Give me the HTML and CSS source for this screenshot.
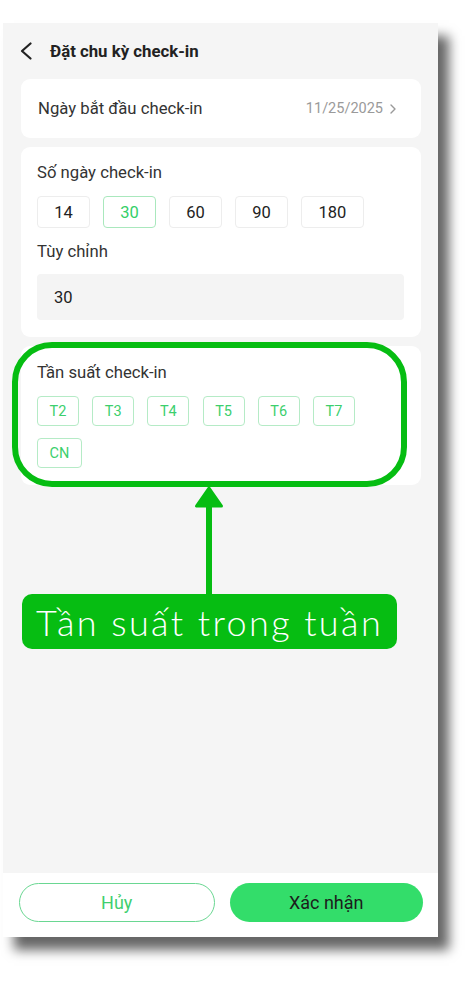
FILE: index.html
```html
<!DOCTYPE html>
<html lang="vi">
<head>
<meta charset="utf-8">
<title>Đặt chu kỳ check-in</title>
<link rel="stylesheet" href="styles.css">
</head>
<body>
<div class="phone">
  <header class="topbar">
    <svg class="back" viewBox="0 0 14 18" width="14" height="18"><path d="M11.5 1.5 L3 9 L11.5 16.5" fill="none" stroke="#222" stroke-width="2.2" stroke-linecap="round" stroke-linejoin="round"/></svg>
    <h1 class="title">Đặt chu kỳ check-in</h1>
  </header>
  <main class="content">
    <section class="card card-row">
      <span class="row-label">Ngày bắt đầu check-in</span>
      <span class="date">11/25/2025<svg class="chev" viewBox="0 0 8 12" width="8" height="12"><path d="M2 2 L6 6 L2 10" fill="none" stroke="#999" stroke-width="1.4" stroke-linecap="round" stroke-linejoin="round"/></svg></span>
    </section>
    <section class="card">
      <div class="label">Số ngày check-in</div>
      <div class="chips">
        <span class="chip">14</span>
        <span class="chip chip-on">30</span>
        <span class="chip">60</span>
        <span class="chip">90</span>
        <span class="chip chip-wide">180</span>
      </div>
      <div class="label label-gap">Tùy chỉnh</div>
      <div class="input">30</div>
    </section>
    <section class="card">
      <div class="label">Tần suất check-in</div>
      <div class="days">
        <span class="day">T2</span>
        <span class="day">T3</span>
        <span class="day">T4</span>
        <span class="day">T5</span>
        <span class="day">T6</span>
        <span class="day">T7</span>
        <span class="day day-wide">CN</span>
      </div>
    </section>
  </main>
  <footer class="bottombar">
    <button class="btn btn-outline">Hủy</button>
    <button class="btn btn-primary">Xác nhận</button>
  </footer>
  <div class="annot-ring"></div>
  <svg class="annot-arrow" viewBox="0 0 32 112" width="32" height="112">
    <rect x="13" y="18" width="6" height="94" fill="#06bd12"/>
    <path d="M16 3 L3.5 21 L28.5 21 Z" fill="#06bd12" stroke="#06bd12" stroke-width="3" stroke-linejoin="round"/>
  </svg>
  <div class="annot-label">Tần suất trong tuần</div>
</div>
</body>
</html>
```

FILE: styles.css
```css
* { box-sizing: border-box; }
html, body { margin: 0; padding: 0; background: #ffffff; }
body {
  min-height: 995px;
  padding-top: 23px;
  font-family: Roboto, "Liberation Sans", Arial, sans-serif;
  color: #222;
}
.phone {
  position: relative;
  margin: 0 0 0 3px;
  width: 435px;
  height: 914px;
  background: #f5f5f5;
  display: flex;
  flex-direction: column;
  box-shadow: 11px 13px 11px rgba(0, 0, 0, 0.6);
}
.topbar {
  height: 56px;
  flex: none;
  display: flex;
  align-items: center;
  padding-left: 16px;
  gap: 17px;
}
.back { display: block; }
.title {
  margin: 0;
  font-size: 16.8px;
  font-weight: 700;
  color: #222;
  line-height: 20px;
}
.content {
  flex: 1;
  display: flex;
  flex-direction: column;
  gap: 9px;
  padding: 0 17px 0 18px;
}
.card {
  background: #fff;
  border-radius: 9px;
  padding: 16px 17px 17px 16px;
}
.card:last-child { padding-top: 17px; }
.card-row {
  height: 59px;
  padding: 0 24px 0 17px;
  display: flex;
  align-items: center;
  justify-content: space-between;
}
.row-label { font-size: 16.7px; color: #333; }
.date {
  font-size: 14.5px;
  color: #9a9a9a;
  display: flex;
  align-items: center;
  gap: 6px;
}
.chev { display: block; }
.label {
  font-size: 16.7px;
  line-height: 20px;
  color: #333;
}
.label-gap { margin-top: 14px; }
.chips {
  margin-top: 13px;
  display: flex;
  gap: 13px;
}
.chip {
  width: 53px;
  height: 32px;
  border: 1px solid #ededed;
  border-radius: 4px;
  display: flex;
  align-items: center;
  justify-content: center;
  font-size: 16.5px;
  color: #222;
}
.chip-wide { width: 63px; }
.chip-on { border-color: #a9e8bd; color: #35cf68; }
.input {
  margin-top: 12px;
  height: 46px;
  background: #f4f4f4;
  border-radius: 4px;
  padding-left: 17px;
  display: flex;
  align-items: center;
  font-size: 16.5px;
  color: #222;
}
.days {
  margin-top: 13px;
  display: flex;
  flex-wrap: wrap;
  gap: 12px 13.2px;
}
.day {
  width: 42px;
  height: 30px;
  border: 1px solid #b5ebc6;
  border-radius: 4px;
  display: flex;
  align-items: center;
  justify-content: center;
  font-size: 14.5px;
  color: #3ccf6d;
}
.day-wide { width: 45px; }
.bottombar {
  flex: none;
  height: 64px;
  background: #fff;
  display: flex;
  gap: 15px;
  padding: 10px 15px 0 16px;
}
.btn {
  flex: 1;
  height: 39px;
  border-radius: 20px;
  font-family: Roboto, "Liberation Sans", Arial, sans-serif;
  font-size: 18px;
  font-weight: 400;
  cursor: pointer;
}
.btn-outline {
  background: #fff;
  border: 1.5px solid #6ad792;
  color: #3fcf6f;
}
.btn-primary {
  background: #33dd6a;
  border: none;
  color: #1c1c1c;
}
.annot-ring {
  position: absolute;
  left: 9px;
  top: 319px;
  width: 395px;
  height: 145px;
  border: 6px solid #06bd12;
  border-radius: 40px;
}
.annot-arrow {
  position: absolute;
  left: 190px;
  top: 462px;
}
.annot-label {
  position: absolute;
  left: 19px;
  top: 571px;
  width: 375px;
  height: 55px;
  border-radius: 10px;
  background: #06bd12;
  color: #fff;
  font-family: Lato, "Open Sans", sans-serif;
  font-size: 36px;
  font-weight: 300;
  letter-spacing: 2.4px;
  display: flex;
  align-items: center;
  justify-content: center;
}
```
